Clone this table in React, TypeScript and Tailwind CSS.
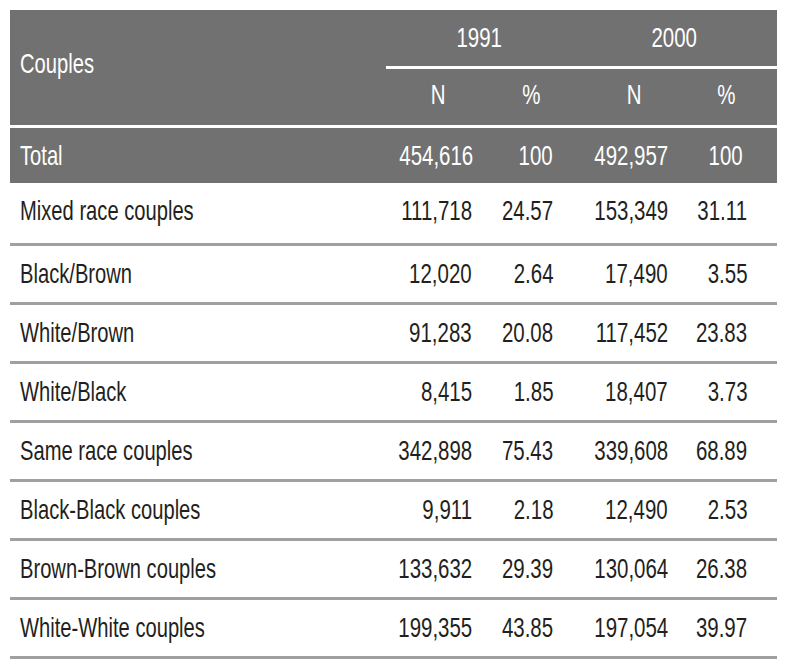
import React from 'react';

const COLS = 'grid grid-cols-[376px_104px_82px_114px_91px]';

const ROWS: { label: string; n1: string; p1: string; n2: string; p2: string }[] = [
    { label: 'Black/Brown', n1: '12,020', p1: '2.64', n2: '17,490', p2: '3.55' },
    { label: 'White/Brown', n1: '91,283', p1: '20.08', n2: '117,452', p2: '23.83' },
    { label: 'White/Black', n1: '8,415', p1: '1.85', n2: '18,407', p2: '3.73' },
    { label: 'Same race couples', n1: '342,898', p1: '75.43', n2: '339,608', p2: '68.89' },
    { label: 'Black-Black couples', n1: '9,911', p1: '2.18', n2: '12,490', p2: '2.53' },
    { label: 'Brown-Brown couples', n1: '133,632', p1: '29.39', n2: '130,064', p2: '26.38' },
    { label: 'White-White couples', n1: '199,355', p1: '43.85', n2: '197,054', p2: '39.97' },
];

// condensed look: no narrow face is installed, so squeeze Liberation Sans
const Label = ({ children }: { children: React.ReactNode }) => (
    <span className="inline-block whitespace-nowrap scale-x-[0.72] origin-left">{children}</span>
);
const Num = ({ children }: { children: React.ReactNode }) => (
    <span className="shrink-0 whitespace-nowrap scale-x-[0.73] origin-right">{children}</span>
);
const Head = ({ children }: { children: React.ReactNode }) => (
    <span className="shrink-0 whitespace-nowrap scale-x-[0.73] origin-center">{children}</span>
);

const App: React.FC = () => {
    return (
        <div className="min-h-screen bg-white p-[10px] font-['Liberation_Sans',Arial,sans-serif] text-[28px] leading-none">
            <div className="w-[767px]">

                {/* Header */}
                <div className={`${COLS} bg-[#717171] text-white`}>
                    <div className="row-span-2 flex items-center pl-[10px] pb-[8px]"><Label>Couples</Label></div>
                    <div className="col-span-2 h-[59px] flex items-center justify-center border-b-[3px] border-white"><Head>1991</Head></div>
                    <div className="col-span-2 h-[59px] flex items-center justify-center border-b-[3px] border-white"><Head>2000</Head></div>
                    <div className="h-[56px] flex items-center justify-center pb-[4px]"><Head>N</Head></div>
                    <div className="h-[56px] flex items-center justify-center pb-[4px]"><Head>%</Head></div>
                    <div className="h-[56px] flex items-center justify-center pl-[10px] pb-[4px]"><Head>N</Head></div>
                    <div className="h-[56px] flex items-center justify-center pr-[11px] pb-[4px]"><Head>%</Head></div>
                </div>

                {/* Total */}
                <div className={`${COLS} mt-[3px] h-[55px] items-center bg-[#717171] text-white`}>
                    <div className="pl-[10px]"><Label>Total</Label></div>
                    <div className="flex justify-end pr-[17px]"><Num>454,616</Num></div>
                    <div className="flex justify-end pr-[19px]"><Num>100</Num></div>
                    <div className="flex justify-end pr-[18px]"><Num>492,957</Num></div>
                    <div className="flex justify-end pr-[34px]"><Num>100</Num></div>
                </div>

                {/* Mixed race */}
                <div className={`${COLS} h-[63px] items-center border-b-[3px] border-[#a0a0a0] text-[#231f20]`}>
                    <div className="pl-[10px] pb-[4px]"><Label>Mixed race couples</Label></div>
                    <div className="flex justify-end pr-[18px] pb-[4px]"><Num>111,718</Num></div>
                    <div className="flex justify-end pr-[19px] pb-[4px]"><Num>24.57</Num></div>
                    <div className="flex justify-end pr-[18px] pb-[4px]"><Num>153,349</Num></div>
                    <div className="flex justify-end pr-[30px] pb-[4px]"><Num>31.11</Num></div>
                </div>

                {ROWS.map((r) => (
                    <div key={r.label} className={`${COLS} h-[59px] items-center border-b-[3px] border-[#a0a0a0] text-[#231f20]`}>
                        <div className="pl-[10px]"><Label>{r.label}</Label></div>
                        <div className="flex justify-end pr-[18px]"><Num>{r.n1}</Num></div>
                        <div className="flex justify-end pr-[19px]"><Num>{r.p1}</Num></div>
                        <div className="flex justify-end pr-[18px]"><Num>{r.n2}</Num></div>
                        <div className="flex justify-end pr-[30px]"><Num>{r.p2}</Num></div>
                    </div>
                ))}
            </div>
        </div>
    );
};

export default App;
